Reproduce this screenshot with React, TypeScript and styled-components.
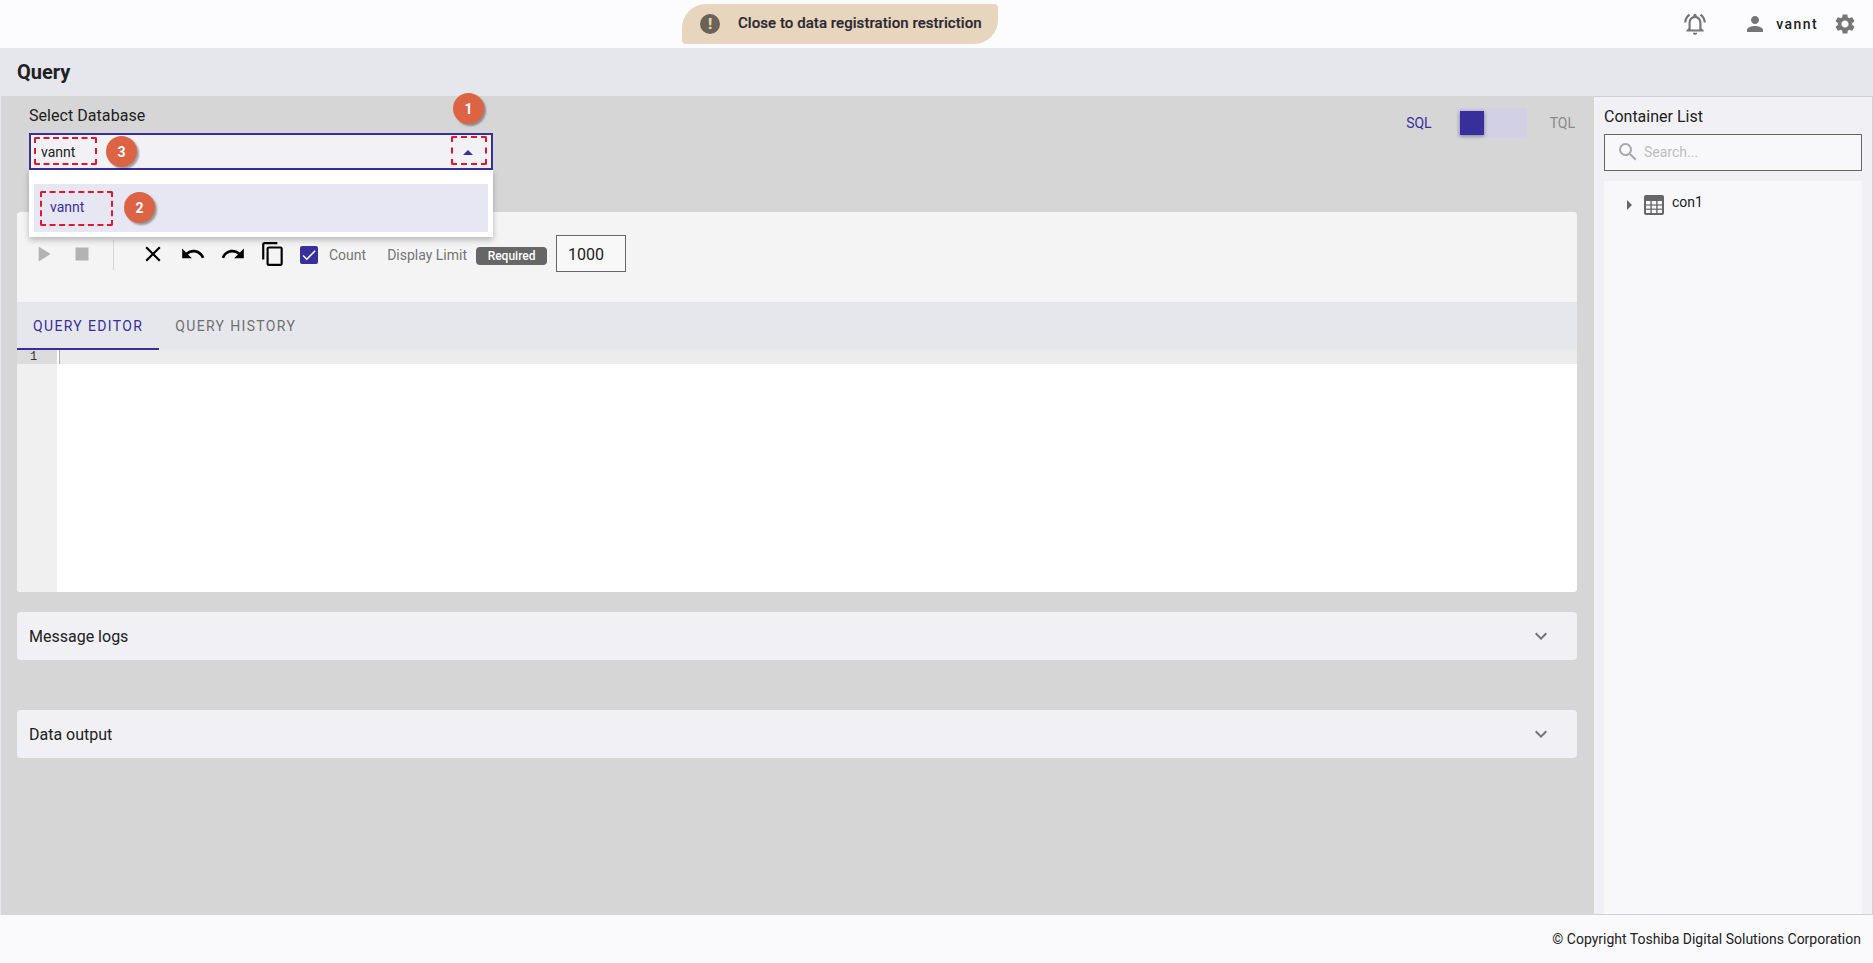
import styled, { createGlobalStyle } from "styled-components";
import {
  MdCheck,
  MdClose,
  MdContentCopy,
  MdExpandMore,
  MdOutlineNotificationsActive,
  MdPerson,
  MdPlayArrow,
  MdRedo,
  MdSearch,
  MdSettings,
  MdStop,
  MdUndo,
} from "react-icons/md";

const PRIMARY = "#372f9b";

const GlobalStyle = createGlobalStyle`
  html, body {
    margin: 0;
    padding: 0;
    height: 100%;
  }
  body {
    font-family: Roboto, "Liberation Sans", sans-serif;
    color: #212121;
    overflow: hidden;
  }
  * {
    box-sizing: border-box;
  }
`;

const Page = styled.div`
  display: flex;
  flex-direction: column;
  height: 963px;
  background: #fcfcfe;
`;

const Header = styled.header`
  display: flex;
  align-items: flex-start;
  height: 48px;
  padding: 4px 0 0 682px;
  flex-shrink: 0;
`;

const WarningPill = styled.div`
  display: flex;
  align-items: center;
  width: 316px;
  height: 40px;
  padding-left: 18px;
  gap: 18px;
  background: #e7d5bd;
  border-radius: 24px 4px 24px 4px;
  font-size: 15px;
  font-weight: 500;
  letter-spacing: 0.06px;
  color: #2a2a33;
`;

const WarningText = styled.span`
  margin-top: -2px;
  -webkit-text-stroke: 0.2px #2a2a33;
`;

const WarningDot = styled.span`
  display: flex;
  align-items: center;
  justify-content: center;
  width: 20px;
  height: 20px;
  border-radius: 50%;
  background: #6b6357;
  color: #e7d5bd;
  font-size: 15px;
  font-weight: 900;
  line-height: 1;
`;

const UserArea = styled.div`
  display: flex;
  align-items: center;
  height: 40px;
  margin-left: auto;
  padding-right: 16px;
  color: #757575;
`;

const Bell = styled(MdOutlineNotificationsActive)`
  font-size: 26px;
  margin-right: 35px;
`;

const UserName = styled.span`
  margin: 0 15px 0 9px;
  font-size: 14px;
  font-weight: 500;
  letter-spacing: 1.4px;
  color: #212121;
`;

const TitleBar = styled.div`
  display: flex;
  align-items: center;
  height: 48px;
  padding: 0 0 1px 17px;
  flex-shrink: 0;
  background: #e6e7ec;
  font-size: 20px;
  font-weight: 700;
`;

const Body = styled.div`
  display: flex;
  flex: 1;
  min-height: 0;
`;

const Main = styled.main`
  flex: 1;
  padding: 0 17px 0 16px;
  background: #d6d6d6;
  border-left: 1px solid #e6e7ec;
`;

const TopRow = styled.div`
  display: flex;
  justify-content: space-between;
  align-items: flex-start;
  height: 116px;
`;

const SelectGroup = styled.div`
  position: relative;
  width: 464px;
  margin-left: 12px;
  padding-top: 8px;
`;

const SelectLabel = styled.div`
  height: 24px;
  margin-bottom: 5px;
  font-size: 16px;
  letter-spacing: 0.05px;
  line-height: 24px;
`;

const SelectBox = styled.div`
  display: flex;
  align-items: center;
  justify-content: space-between;
  height: 37px;
  padding: 1px 18px 0 10px;
  background: #f2f1f6;
  border: 2px solid ${PRIMARY};
  font-size: 14px;
`;

const Caret = styled.span`
  width: 0;
  height: 0;
  border-left: 5px solid transparent;
  border-right: 5px solid transparent;
  border-bottom: 5px solid ${PRIMARY};
`;

const Dropdown = styled.div`
  position: absolute;
  top: 74px;
  left: 0;
  right: 0;
  z-index: 5;
  height: 67px;
  padding: 14px 5px 0;
  background: #fff;
  box-shadow: 0 3px 6px rgba(0, 0, 0, 0.25);
`;

const DropdownItem = styled.div`
  display: flex;
  align-items: center;
  height: 48px;
  padding: 0 0 2px 16px;
  background: #e7e7f3;
  color: ${PRIMARY};
  font-size: 14px;
`;

const Marker = styled.span<{ $x: number; $y: number }>`
  position: absolute;
  left: ${(p) => p.$x}px;
  top: ${(p) => p.$y}px;
  z-index: 6;
  display: flex;
  align-items: center;
  justify-content: center;
  width: 31px;
  height: 31px;
  border-radius: 50%;
  background: #dc6445;
  box-shadow: 2px 2px 2px rgba(0, 0, 0, 0.35);
  color: #fff;
  font-size: 14px;
  font-weight: 700;
`;

const DashedBox = styled.span<{ $x: number; $y: number; $w: number; $h: number }>`
  position: absolute;
  left: ${(p) => p.$x}px;
  top: ${(p) => p.$y}px;
  z-index: 6;
  width: ${(p) => p.$w}px;
  height: ${(p) => p.$h}px;
  border: 2px dashed #e8142c;
  border-radius: 2px;
`;

const ModeSwitch = styled.div`
  display: flex;
  align-items: center;
  height: 30px;
  margin-top: 12px;
  padding-right: 2px;
`;

const ModeLabel = styled.span<{ $active?: boolean }>`
  font-size: 14px;
  font-weight: 400;
  color: ${(p) => (p.$active ? PRIMARY : "#8a8a8a")};
`;

const ModeTrack = styled.div`
  width: 70px;
  height: 30px;
  margin: 0 23px 0 25px;
  padding: 3px;
  background: #d1d0e4;
`;

const ModeThumb = styled.div`
  width: 24px;
  height: 24px;
  background: ${PRIMARY};
  box-shadow: 0 1px 4px rgba(0, 0, 0, 0.4);
`;

const EditorPanel = styled.section`
  display: flex;
  flex-direction: column;
  height: 380px;
  border-radius: 4px;
  overflow: hidden;
  background: #fff;
`;

const Toolbar = styled.div`
  display: flex;
  align-items: flex-start;
  height: 90px;
  padding: 23px 0 0 6px;
  background: #f4f4f4;
`;

const ToolButton = styled.span<{ $muted?: boolean; $nudge?: number }>`
  display: flex;
  align-items: center;
  justify-content: center;
  width: 39px;
  height: 37px;
  margin-left: ${(p) => p.$nudge ?? 0}px;
  font-size: 26px;
  color: ${(p) => (p.$muted ? "#b3b3b3" : "#000")};
`;

const ToolDivider = styled.span`
  width: 1px;
  height: 30px;
  margin: 5px 19px 0 12px;
  background: #d6d6d6;
`;

const CopyButton = styled(ToolButton)`
  margin-right: -2px;
`;

const CheckBox = styled.span`
  display: flex;
  align-items: center;
  justify-content: center;
  width: 18px;
  height: 18px;
  margin: 11px 11px 0 10px;
  border-radius: 2px;
  background: ${PRIMARY};
  color: #fff;
  font-size: 18px;
`;

const ToolLabel = styled.span<{ $gap: number }>`
  margin-right: ${(p) => p.$gap}px;
  font-size: 14px;
  line-height: 41px;
  color: #757575;
`;

const RequiredTag = styled.span`
  width: 71px;
  height: 18px;
  margin: 12px 9px 0 0;
  border-radius: 4px;
  background: #666;
  color: #fff;
  font-size: 12px;
  font-weight: 500;
  line-height: 18px;
  text-align: center;
`;

const LimitInput = styled.div`
  width: 70px;
  height: 37px;
  padding-left: 11px;
  border: 1px solid #666;
  background: #f8f8f8;
  font-size: 16px;
  line-height: 37px;
`;

const Tabs = styled.div`
  display: flex;
  height: 48px;
  background: #e6e7ec;
`;

const Tab = styled.div<{ $active?: boolean }>`
  height: 48px;
  padding: 0 16px;
  border-bottom: 2px solid ${(p) => (p.$active ? PRIMARY : "transparent")};
  color: ${(p) => (p.$active ? PRIMARY : "#6f6f6f")};
  font-size: 14px;
  font-weight: 400;
  letter-spacing: 1.35px;
  line-height: 48px;
`;

const Editor = styled.div`
  display: flex;
  flex: 1;
  background: #fff;
`;

const Gutter = styled.div`
  width: 40px;
  background: #f0f0f0;
`;

const LineNumber = styled.div`
  height: 14px;
  padding-left: 13px;
  background: #dcdcdc;
  font-family: "Liberation Mono", monospace;
  font-size: 12px;
  line-height: 14px;
  color: #333;
`;

const ActiveLine = styled.div`
  flex: 1;
  height: 14px;
  background: #ececec;
  border-left: 1px solid #aaa;
  margin-left: 2px;
`;

const Accordion = styled.div<{ $gap: number }>`
  display: flex;
  align-items: center;
  justify-content: space-between;
  height: 48px;
  margin-top: ${(p) => p.$gap}px;
  padding: 0 24px 0 12px;
  border-radius: 4px;
  background: #f0f0f5;
  font-size: 16px;
  color: #757575;
`;

const AccordionTitle = styled.span`
  color: #212121;
`;

const SidePanel = styled.aside`
  display: flex;
  flex-direction: column;
  width: 279px;
  padding: 0 10px;
  background: #f0f0f5;
  border: 1px solid #d0d0d6;
  border-width: 1px 1px 1px 0;
`;

const SideTitle = styled.div`
  height: 37px;
  font-size: 16px;
  line-height: 40px;
`;

const SearchBox = styled.div`
  display: flex;
  align-items: center;
  gap: 4px;
  height: 37px;
  padding: 0 0 1px 11px;
  background: #f8f8fb;
  border: 1px solid #666;
  color: #a8a8a8;
  font-size: 14px;
`;

const SearchHint = styled.span`
  color: #bdbdbd;
`;

const TreeList = styled.div`
  flex: 1;
  margin-top: 10px;
  padding: 14px 0 0 23px;
  background: #f8f8fb;
`;

const TreeRow = styled.div`
  display: flex;
  align-items: flex-start;
  font-size: 14px;
`;

const TreeArrow = styled.span`
  width: 0;
  height: 0;
  margin: 5px 12px 0 0;
  border-top: 5px solid transparent;
  border-bottom: 5px solid transparent;
  border-left: 5px solid #666;
`;

const TreeName = styled.span`
  margin: -1px 0 0 8px;
`;

const Footer = styled.footer`
  height: 48px;
  padding-right: 12px;
  flex-shrink: 0;
  background: #fafafd;
  font-size: 14px;
  line-height: 48px;
  text-align: right;
`;

const TableIcon = () => (
  <svg width="20" height="20" viewBox="0 0 20 20">
    <rect x="0" y="0" width="20" height="20" rx="2" fill="#666" />
    <g fill="#f8f8fb">
      <rect x="2" y="6" width="4.4" height="3.4" />
      <rect x="7.8" y="6" width="4.4" height="3.4" />
      <rect x="13.6" y="6" width="4.4" height="3.4" />
      <rect x="2" y="10.6" width="4.4" height="3" />
      <rect x="7.8" y="10.6" width="4.4" height="3" />
      <rect x="13.6" y="10.6" width="4.4" height="3" />
      <rect x="2" y="14.8" width="4.4" height="3.2" />
      <rect x="7.8" y="14.8" width="4.4" height="3.2" />
      <rect x="13.6" y="14.8" width="4.4" height="3.2" />
    </g>
  </svg>
);

const App = () => {
  return (
    <Page>
      <GlobalStyle />
      <Header>
        <WarningPill>
          <WarningDot>!</WarningDot>
          <WarningText>Close to data registration restriction</WarningText>
        </WarningPill>
        <UserArea>
          <Bell />
          <MdPerson size={24} />
          <UserName>vannt</UserName>
          <MdSettings size={24} />
        </UserArea>
      </Header>
      <TitleBar>Query</TitleBar>
      <Body>
        <Main>
          <TopRow>
            <SelectGroup>
              <SelectLabel>Select Database</SelectLabel>
              <SelectBox>
                vannt
                <Caret />
              </SelectBox>
              <Dropdown>
                <DropdownItem>vannt</DropdownItem>
              </Dropdown>
              <DashedBox $x={5} $y={41} $w={63} $h={28} />
              <DashedBox $x={422} $y={40} $w={36} $h={29} />
              <DashedBox $x={11} $y={95} $w={73} $h={35} />
              <Marker $x={424} $y={-3}>1</Marker>
              <Marker $x={77} $y={40}>3</Marker>
              <Marker $x={95} $y={96}>2</Marker>
            </SelectGroup>
            <ModeSwitch>
              <ModeLabel $active>SQL</ModeLabel>
              <ModeTrack>
                <ModeThumb />
              </ModeTrack>
              <ModeLabel>TQL</ModeLabel>
            </ModeSwitch>
          </TopRow>
          <EditorPanel>
            <Toolbar>
              <ToolButton $muted>
                <MdPlayArrow />
              </ToolButton>
              <ToolButton $muted>
                <MdStop />
              </ToolButton>
              <ToolDivider />
              <ToolButton>
                <MdClose />
              </ToolButton>
              <ToolButton $nudge={1}>
                <MdUndo />
              </ToolButton>
              <ToolButton $nudge={1}>
                <MdRedo />
              </ToolButton>
              <CopyButton $nudge={1}>
                <MdContentCopy />
              </CopyButton>
              <CheckBox>
                <MdCheck />
              </CheckBox>
              <ToolLabel $gap={21}>Count</ToolLabel>
              <ToolLabel $gap={9}>Display Limit</ToolLabel>
              <RequiredTag>Required</RequiredTag>
              <LimitInput>1000</LimitInput>
            </Toolbar>
            <Tabs>
              <Tab $active>QUERY EDITOR</Tab>
              <Tab>QUERY HISTORY</Tab>
            </Tabs>
            <Editor>
              <Gutter>
                <LineNumber>1</LineNumber>
              </Gutter>
              <ActiveLine />
            </Editor>
          </EditorPanel>
          <Accordion $gap={20}>
            <AccordionTitle>Message logs</AccordionTitle>
            <MdExpandMore size={24} />
          </Accordion>
          <Accordion $gap={50}>
            <AccordionTitle>Data output</AccordionTitle>
            <MdExpandMore size={24} />
          </Accordion>
        </Main>
        <SidePanel>
          <SideTitle>Container List</SideTitle>
          <SearchBox>
            <MdSearch size={24} />
            <SearchHint>Search...</SearchHint>
          </SearchBox>
          <TreeList>
            <TreeRow>
              <TreeArrow />
              <TableIcon />
              <TreeName>con1</TreeName>
            </TreeRow>
          </TreeList>
        </SidePanel>
      </Body>
      <Footer>© Copyright Toshiba Digital Solutions Corporation</Footer>
    </Page>
  );
};

export default App;
